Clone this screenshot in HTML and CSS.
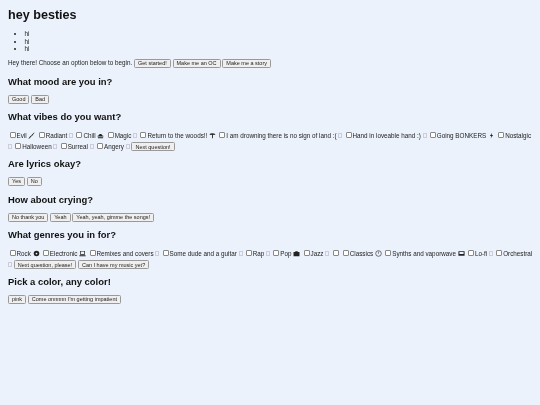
FILE: index.html
```html
<!DOCTYPE html>
<html lang="en">
<head>
    <meta charset="UTF-8">
    <meta name="viewport" content="width=device-width, initial-scale=1.0">
    <title>hey besties</title>
    <link rel="stylesheet" href="styles.css">
</head>
<body>
    <h1>hey besties</h1>
    <ul>
        <li>hi</li>
        <li>hi</li>
        <li>hi</li>
    </ul>
    <p>Hey there! Choose an option below to begin.
        <button>Get started!</button>
        <button>Make me an OC</button>
        <button>Make me a story</button>
    </p>

    <h2>What mood are you in?</h2>
    <div class="row">
        <button>Good</button>
        <button>Bad</button>
    </div>

    <h2>What vibes do you want?</h2>
    <div class="options">
        <input type="checkbox">Evil <svg class="emoji" viewBox="0 0 8 8"><path d="M0.5 7.5 3 4.2 4 5.2 1.2 7.6zM3.5 4 7 .5 7.4 .8 4.4 4.8z"/></svg>
        <input type="checkbox">Radiant <span class="tofu"></span>
        <input type="checkbox">Chill <svg class="emoji" viewBox="0 0 8 8"><path d="M.5 5.2C.5 4.4 1.2 4 1.8 4 2 2.8 3 2.2 4 2.2S5.8 3 6 3.9C6.9 3.9 7.5 4.5 7.5 5.2zM1 6h6v1H1z"/></svg>
        <input type="checkbox">Magic <span class="tofu"></span>
        <input type="checkbox">Return to the woods!! <svg class="emoji" viewBox="0 0 8 8"><path d="M.5 2.5C2 1.2 5 1 7.5 2.5L6 3.4 4.6 3 4.4 7H3.4L3.6 3 1.8 3.4z"/></svg>
        <input type="checkbox">I am drowning there is no sign of land :( <span class="tofu"></span>
        <input type="checkbox">Hand in loveable hand :) <span class="tofu"></span>
        <input type="checkbox">Going BONKERS <svg class="emoji" viewBox="0 0 8 8"><path d="M4.8 .8 2.2 4.6H3.8L3 7.4 5.8 3.4H4.2z"/></svg>
        <input type="checkbox">Nostalgic <span class="tofu"></span>
        <input type="checkbox">Halloween <span class="tofu"></span>
        <input type="checkbox">Surreal <span class="tofu"></span>
        <input type="checkbox">Angery <span class="tofu"></span>
        <button>Next question!</button>
    </div>

    <h2>Are lyrics okay?</h2>
    <div class="row">
        <button>Yes</button>
        <button>No</button>
    </div>

    <h2>How about crying?</h2>
    <div class="row">
        <button>No thank you</button>
        <button>Yeah</button>
        <button>Yeah, yeah, gimme the songs!</button>
    </div>

    <h2>What genres you in for?</h2>
    <div class="options">
        <input type="checkbox">Rock <svg class="emoji" viewBox="0 0 8 8"><path fill-rule="evenodd" d="M4 .8a3.2 3.2 0 1 0 0 6.4 3.2 3.2 0 0 0 0-6.4zM4 3a1 1 0 1 1 0 2 1 1 0 0 1 0-2z"/></svg>
        <input type="checkbox">Electronic <svg class="emoji" viewBox="0 0 8 8"><path fill-rule="evenodd" d="M1.2 1h5.6v4.4H1.2zM2 1.8v2.8h4V1.8zM.5 6h7v1.2h-7z"/></svg>
        <input type="checkbox">Remixes and covers <span class="tofu"></span>
        <input type="checkbox">Some dude and a guitar <span class="tofu"></span>
        <input type="checkbox">Rap <span class="tofu"></span>
        <input type="checkbox">Pop <svg class="emoji" viewBox="0 0 8 8"><path d="M.6 2.4h6.8v4.8H.6zM2.6 1h2.8v1H2.6z"/></svg>
        <input type="checkbox">Jazz <span class="tofu"></span>
        <input type="checkbox">
        <input type="checkbox">Classics <svg class="emoji" viewBox="0 0 8 8"><circle cx="4" cy="4" r="3.2" fill="none" stroke="#222" stroke-width=".7"/><path d="M3.7 1.8h.6v2.4h-.6z"/></svg>
        <input type="checkbox">Synths and vaporwave <svg class="emoji" viewBox="0 0 8 8"><path fill-rule="evenodd" d="M.5 1.4h7v5.2h-7zM1.6 2.4v2.2h4.8V2.4z"/></svg>
        <input type="checkbox">Lo-fi <span class="tofu"></span>
        <input type="checkbox">Orchestral <span class="tofu"></span>
        <button>Next question, please!</button>
        <button>Can I have my music yet?</button>
    </div>

    <h2>Pick a color, any color!</h2>
    <div class="row">
        <button>pink</button>
        <button>Come onnnnn I'm getting impatient</button>
    </div>
</body>
</html>
```

FILE: styles.css
```css
html {
    background-color: #ebf2fb;
}

body {
    margin: 0;
    padding: 8px 6px 8px 8px;
    color: #222;
    font-family: "Liberation Sans", Arial, sans-serif;
    font-size: 6.3px;
    line-height: 7.3px;
    will-change: transform;
}

h1 {
    margin: 0 0 8.4px;
    font-size: 12.6px;
    line-height: 14px;
    color: #111;
}

h2 {
    margin: 6px 0 7.5px;
    font-size: 9.45px;
    line-height: 11px;
    color: #111;
}

ul {
    margin: 0 0 6px;
    padding-left: 16.5px;
}

p {
    margin: 0 0 8px;
    line-height: 9px;
}

.row {
    margin: 8px 0 7.7px;
    line-height: 8px;
}

.options {
    margin: 6px 0;
    line-height: 11px;
}

input {
    appearance: none;
    width: 6px;
    height: 6px;
    margin: 0 1px 0 1.5px;
    vertical-align: -0.5px;
    background-color: #fff;
    border: 1px solid #888;
    border-radius: 1px;
}

button {
    padding: .5px 3px;
    font-family: inherit;
    font-size: 5.5px;
    line-height: 6px;
    color: #222;
    background-color: #efefef;
    border: 1px solid #999;
    border-radius: 1.4px;
}

.emoji {
    width: 7px;
    height: 7px;
    vertical-align: -1px;
    fill: #222;
}

.tofu {
    display: inline-block;
    width: 4px;
    height: 5px;
    vertical-align: -0.5px;
    border: 1px solid #ccd;
    box-sizing: border-box;
}
```
